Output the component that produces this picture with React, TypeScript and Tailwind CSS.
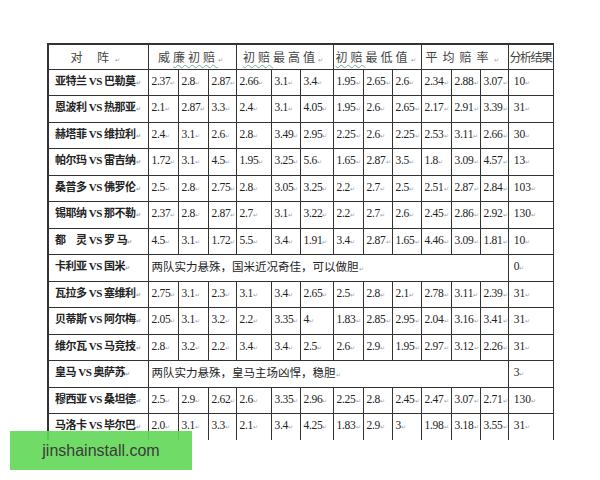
import React from "react"

type Row =
  | { team: string; odds: string[]; result: string }
  | { team: string; note: string; result: string }

const rows: Row[] = [
  { team: "亚特兰 VS 巴勒莫", odds: ["2.37", "2.8", "2.87", "2.66", "3.1", "3.4", "1.95", "2.65", "2.6", "2.34", "2.88", "3.07"], result: "10" },
  { team: "恩波利 VS 热那亚", odds: ["2.1", "2.87", "3.3", "2.4", "3.1", "4.05", "1.95", "2.6", "2.65", "2.17", "2.91", "3.39"], result: "31" },
  { team: "赫塔菲 VS 维拉利", odds: ["2.4", "3.1", "2.6", "2.8", "3.49", "2.95", "2.25", "2.6", "2.25", "2.53", "3.11", "2.66"], result: "30" },
  { team: "帕尔玛 VS 雷吉纳", odds: ["1.72", "3.1", "4.5", "1.95", "3.25", "5.6", "1.65", "2.87", "3.5", "1.8", "3.09", "4.57"], result: "13" },
  { team: "桑普多 VS 佛罗伦", odds: ["2.5", "2.8", "2.75", "2.8", "3.05", "3.25", "2.2", "2.7", "2.5", "2.51", "2.87", "2.84"], result: "103" },
  { team: "锡耶纳 VS 那不勒", odds: ["2.37", "2.8", "2.87", "2.7", "3.1", "3.22", "2.2", "2.7", "2.6", "2.45", "2.86", "2.92"], result: "130" },
  { team: "都　灵 VS 罗 马", odds: ["4.5", "3.1", "1.72", "5.5", "3.4", "1.91", "3.4", "2.87", "1.65", "4.46", "3.09", "1.81"], result: "10" },
  { team: "卡利亚 VS 国米", note: "两队实力悬殊，国米近况奇佳，可以做胆", result: "0" },
  { team: "瓦拉多 VS 塞维利", odds: ["2.75", "3.1", "2.3", "3.1", "3.4", "2.65", "2.5", "2.8", "2.1", "2.78", "3.11", "2.39"], result: "31" },
  { team: "贝蒂斯 VS 阿尔梅", odds: ["2.05", "3.1", "3.2", "2.2", "3.35", "4", "1.83", "2.85", "2.95", "2.04", "3.16", "3.41"], result: "31" },
  { team: "维尔瓦 VS 马竞技", odds: ["2.8", "3.2", "2.2", "3.4", "3.4", "2.5", "2.6", "2.9", "1.95", "2.97", "3.12", "2.26"], result: "31" },
  { team: "皇马 VS 奥萨苏", note: "两队实力悬殊，皇马主场凶悍，稳胆", result: "3" },
  { team: "穆西亚 VS 桑坦德", odds: ["2.5", "2.9", "2.62", "2.6", "3.35", "2.96", "2.25", "2.8", "2.45", "2.47", "3.07", "2.71"], result: "130" },
  { team: "马洛卡 VS 毕尔巴", odds: ["2.0", "3.1", "3.3", "2.1", "3.4", "4.25", "1.83", "2.9", "3", "1.98", "3.18", "3.55"], result: "31" },
]

// column widths in px, read off the scan
const widths = [100, 30, 30, 28, 35, 29, 33, 30, 29, 29, 30, 29, 28, 45]

function Mark() {
  return <span className="text-[6px] leading-none text-gray-400">↵</span>
}

const cell = "border border-[#333] align-top pt-[5px] pl-[3px] pr-0 whitespace-nowrap overflow-hidden"
const head = "border border-[#333] font-normal text-[12px] text-[#444] text-center font-['Noto_Sans_CJK_SC',sans-serif]"
const wavy = "underline decoration-wavy decoration-[#7a9] decoration-1 underline-offset-2"

export default function App() {
  return (
    <div className="relative w-[600px] h-[480px] bg-white overflow-hidden">
      <div className="pl-[47px] pt-[43px] h-[440px] overflow-hidden">
        <table className="w-[506px] table-fixed border-collapse border-l-2 border-t-2 border-[#333] text-[11.5px] leading-[13px] text-[#222]">
          <colgroup>
            {widths.map((w, i) => (
              <col key={i} style={{ width: w }} />
            ))}
          </colgroup>
          <thead>
            <tr className="h-[25px]">
              <th className={head + " tracking-[6px]"}>
                对 阵<Mark />
              </th>
              <th colSpan={3} className={head + " tracking-[3px]"}>
                威<span className={wavy}>廉初赔</span><Mark />
              </th>
              <th colSpan={3} className={head + " tracking-[3px]"}>
                <span className={wavy}>初赔</span>最高值<Mark />
              </th>
              <th colSpan={3} className={head + " tracking-[3px]"}>
                <span className={wavy}>初赔</span>最低值<Mark />
              </th>
              <th colSpan={3} className={head + " tracking-[5px]"}>
                平均赔率<Mark />
              </th>
              <th className={head + " text-[11px] text-[#333] tracking-[-1.5px] overflow-hidden whitespace-nowrap"}>
                分析结果
              </th>
            </tr>
          </thead>
          <tbody>
            {rows.map((r, i) => {
              const last = i === rows.length - 1
              const c = last ? cell + " border-b-0" : cell
              return (
                <tr key={i} className="h-[26.5px]">
                  <td className={c + " pl-[6px] text-[11px] font-bold tracking-[-0.5px] font-['Liberation_Serif','Noto_Sans_CJK_SC',serif]"}>
                    {r.team}<Mark />
                  </td>
                  {"odds" in r ? (
                    r.odds.map((o, j) => (
                      <td key={j} className={c + " font-['Liberation_Serif',serif] tracking-[-0.3px]"}>
                        {o}<Mark />
                      </td>
                    ))
                  ) : (
                    <td colSpan={12} className={c + " text-[11.5px] font-['Noto_Sans_CJK_SC',sans-serif]"}>
                      {r.note}<Mark />
                    </td>
                  )}
                  <td className={c + " pl-[5px] font-['Liberation_Serif',serif]"}>
                    {r.result}<Mark />
                  </td>
                </tr>
              )
            })}
          </tbody>
        </table>
      </div>
      <div className="absolute left-[10px] top-[431px] w-[182px] h-[39px] bg-[#62d756]/90 flex items-center justify-center">
        <span className="text-[16px] text-[#3c3c3c] font-['Liberation_Sans',Arial,sans-serif]">
          jinshainstall.com
        </span>
      </div>
    </div>
  )
}
